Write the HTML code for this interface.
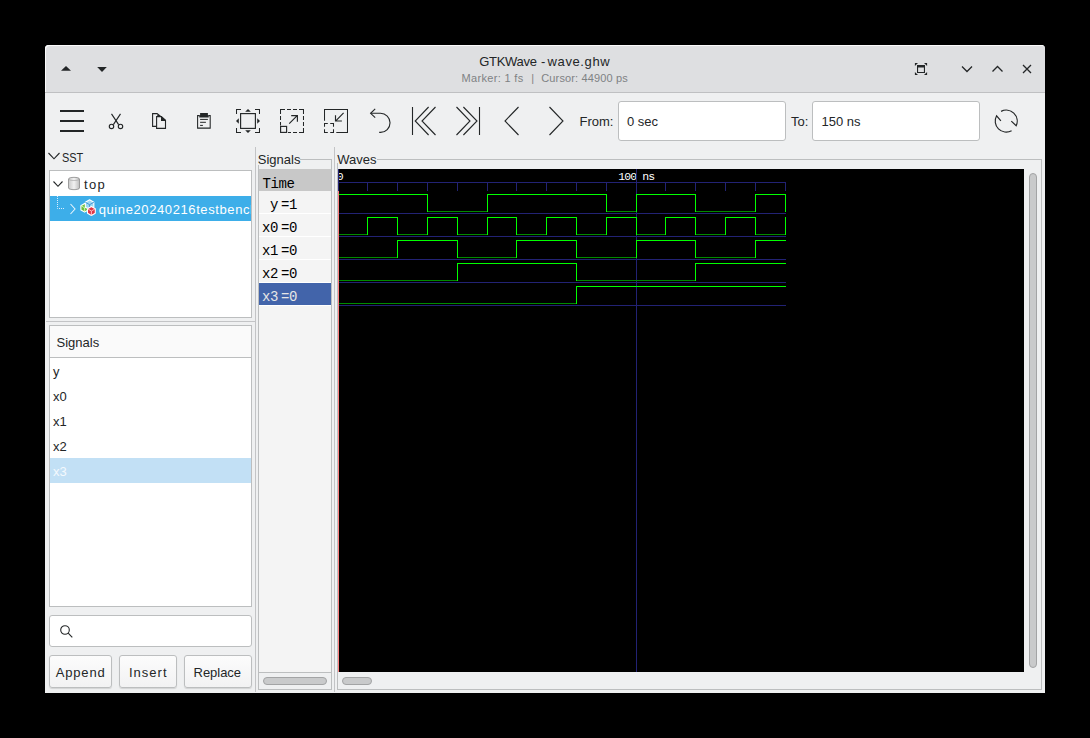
<!DOCTYPE html>
<html><head><meta charset="utf-8"><style>
html,body{margin:0;padding:0;}
body{width:1090px;height:738px;background:#000;position:relative;overflow:hidden;font-family:'Liberation Sans', sans-serif;}
body>div,body>svg{position:absolute;box-sizing:border-box;}
.t{white-space:pre;}
</style></head><body>
<div style="left:45px;top:45px;width:1000px;height:648px;background:#eff0f1;border-radius:4px 4px 0 0;"></div>
<div style="left:45px;top:45px;width:1000px;height:47px;background:#dedfe1;border-radius:4px 4px 0 0;box-shadow:inset 1px 1px 0 #fbfbfc;"></div>
<div style="left:45px;top:92px;width:1000px;height:1px;background:#bfc0c2;"></div>
<div class="t" style="left:479.3px;top:52.70px;font-size:13px;line-height:17px;color:#232627;font-family:'Liberation Sans', sans-serif;letter-spacing:-0.3px;">GTKWave</div>
<div class="t" style="left:540.9px;top:52.70px;font-size:13px;line-height:17px;color:#232627;font-family:'Liberation Sans', sans-serif;">-</div>
<div class="t" style="left:547.6px;top:52.70px;font-size:13px;line-height:17px;color:#232627;font-family:'Liberation Sans', sans-serif;letter-spacing:0.6px;">wave.ghw</div>
<div class="t" style="left:461.5px;top:71.39px;font-size:11px;line-height:14px;color:#7f8284;font-family:'Liberation Sans', sans-serif;letter-spacing:0.33px;">Marker: 1 fs</div>
<div class="t" style="left:531.2px;top:71.39px;font-size:11px;line-height:14px;color:#7f8284;font-family:'Liberation Sans', sans-serif;">|</div>
<div class="t" style="left:541.3px;top:71.39px;font-size:11px;line-height:14px;color:#7f8284;font-family:'Liberation Sans', sans-serif;letter-spacing:0.13px;">Cursor: 44900 ps</div>
<svg style="left:55px;top:60px;" width="60" height="16" viewBox="0 0 60 16"><path d="M6 10.7 L11 5.9 L16 10.7 Z" fill="#232627"/><path d="M42.2 6.9 L47 12 L51.8 6.9 Z" fill="#232627"/></svg>
<svg style="left:910px;top:58px;" width="130" height="22" viewBox="0 0 130 22"><g fill="none" stroke="#232627" stroke-width="1.3"></g><path fill-rule="evenodd" fill="#232627" d="M7 7 H15 V15 H7 Z M8.1 9.4 H13.9 V13.9 H8.1 Z"/><path fill="#232627" d="M4.9 4.9 H8 L4.9 8 Z M17.1 4.9 V8 L14 4.9 Z M4.9 17.1 V14 L8 17.1 Z M17.1 17.1 H14 L17.1 14 Z"/><g fill="none" stroke="#232627" stroke-width="1.3"><path d="M52 8.5 L57 13.5 L62 8.5"/><path d="M82.5 13.5 L87.5 8.5 L92.5 13.5"/><path d="M113 7 L121 15 M121 7 L113 15"/></g></svg>
<svg style="left:56px;top:105px;" width="32" height="32" viewBox="0 0 32 32"><g fill="#232627"><rect x="4" y="5" width="24" height="2"/><rect x="4" y="15" width="24" height="2"/><rect x="4" y="25" width="24" height="2"/></g></svg>
<svg style="left:104px;top:108px;" width="24" height="24" viewBox="0 0 24 24"><g fill="none" stroke="#232627" stroke-width="1.15"><path d="M7.5 5.9 L12 12.6 C12.8 13.8 13.6 15 14.6 16.6"/><path d="M16.5 5.9 L12 12.6 C11.2 13.8 10.4 15 9.4 16.6"/><circle cx="7.5" cy="18.4" r="2.2"/><circle cx="16.5" cy="18.4" r="2.2"/></g></svg>
<svg style="left:148px;top:108px;" width="24" height="24" viewBox="0 0 24 24"><g fill="none" stroke="#232627" stroke-width="1.1"><path d="M8.4 18.4 H4.6 V5.6 H9.6"/><path d="M8.6 8.6 H13.4 L17.5 12.6 V20.4 H8.6 Z"/></g><path d="M9.3 5 L18 12 V13 H13 V8.1 H9.3 Z" fill="#232627"/></svg>
<svg style="left:192px;top:108px;" width="24" height="24" viewBox="0 0 24 24"><g fill="none" stroke="#232627" stroke-width="1.05"><path d="M7.6 7.6 H5.6 V20.1 H18.2 V7.6 H16.4"/><path d="M8.1 11.4 H15.9 M8.1 14.3 H13.9 M8.1 17.4 H10.9" stroke-width="1"/></g><path d="M8.1 5.1 H15.9 V7.3 H16.7 V9.5 H7.3 V7.3 H8.1 Z" fill="#232627"/></svg>
<svg style="left:236px;top:109px;" width="24" height="24" viewBox="0 0 24 24"><g fill="none" stroke="#232627" stroke-width="1.05"><path d="M0.5 5 V0.5 H5 M19 0.5 H23.5 V5 M0.5 19 V23.5 H5 M19 23.5 H23.5 V19"/><rect x="4.6" y="4.6" width="14.8" height="14.8" stroke-width="1.15"/></g><g fill="#232627"><path d="M9.2 2.7 L12 0 L14.8 2.7Z M9.2 21.3 L12 24 L14.8 21.3Z M2.8 9.2 L0 12 L2.8 14.8Z M21.2 9.2 L24 12 L21.2 14.8Z"/></g></svg>
<svg style="left:280px;top:109px;" width="24" height="24" viewBox="0 0 24 24"><g fill="none" stroke="#232627" stroke-width="1.05"><path d="M0.5 5 V0.5 H5 M7 0.5 H11 M13 0.5 H17 M19 0.5 H23.5 V5 M23.5 7 V11 M23.5 13 V17 M23.5 19 V23.5 H19 M17 23.5 H13 M11 23.5 H8 M0.5 7 V11 M0.5 13 V16.5"/><rect x="0.6" y="17.4" width="6" height="6" stroke-width="1.15"/><path d="M9.2 14.6 L17.2 6.6 M11.2 6.6 H17.4 V12.8" stroke-width="1.15"/></g></svg>
<svg style="left:324px;top:109px;" width="24" height="24" viewBox="0 0 24 24"><g fill="none" stroke="#232627" stroke-width="1.05"><path d="M0.5 11.8 V0.5 H23.5 V23.5 H12.3"/><path d="M0.5 17.8 V14.5 H3.8 M6.2 14.5 H9.5 V17.8 M9.5 20.3 V23.5 H6.2 M3.8 23.5 H0.5 V20.3"/><path d="M19.6 3.8 L11.8 11.8 M11.5 6.2 V12 H17.9" stroke-width="1.15"/></g></svg>
<svg style="left:368px;top:108px;" width="24" height="26" viewBox="0 0 24 26"><g fill="none" stroke="#232627" stroke-width="1.1"><path d="M2.6 5.3 H12.5 A9.55 9.55 0 0 1 12.5 24.4 H11.2"/><path d="M7.2 0.9 L2.6 5.3 L7.2 9.7"/></g></svg>
<svg style="left:410px;top:106px;" width="28" height="30" viewBox="0 0 28 30"><g fill="none" stroke="#232627" stroke-width="1.1"><path d="M2.5 1 V29"/><path d="M18.6 1 L5.2 15 L18.6 29"/><path d="M25.5 1 L12 15 L25.5 29"/></g></svg>
<svg style="left:454px;top:106px;" width="28" height="30" viewBox="0 0 28 30"><g fill="none" stroke="#232627" stroke-width="1.1"><path d="M25.5 1 V29"/><path d="M9.4 1 L23 15 L9.4 29"/><path d="M2.5 1 L16 15 L2.5 29"/></g></svg>
<svg style="left:500px;top:106px;" width="24" height="30" viewBox="0 0 24 30"><g fill="none" stroke="#232627" stroke-width="1.1"><path d="M18.5 1 L5 15 L18.5 29"/></g></svg>
<svg style="left:544px;top:106px;" width="24" height="30" viewBox="0 0 24 30"><g fill="none" stroke="#232627" stroke-width="1.1"><path d="M5.5 1 L19 15 L5.5 29"/></g></svg>
<div class="t" style="left:579.5px;top:113.00px;font-size:13px;line-height:17px;color:#232627;font-family:'Liberation Sans', sans-serif;">From:</div>
<div style="left:618px;top:101px;width:168px;height:40px;background:#fff;border:1px solid #bcbebf;border-radius:3px;"></div>
<div class="t" style="left:627px;top:113.00px;font-size:13px;line-height:17px;color:#232627;font-family:'Liberation Sans', sans-serif;">0 sec</div>
<div class="t" style="left:791px;top:113.00px;font-size:13px;line-height:17px;color:#232627;font-family:'Liberation Sans', sans-serif;">To:</div>
<div style="left:812px;top:101px;width:168px;height:40px;background:#fff;border:1px solid #bcbebf;border-radius:3px;"></div>
<div class="t" style="left:821.5px;top:113.00px;font-size:13px;line-height:17px;color:#232627;font-family:'Liberation Sans', sans-serif;">150 ns</div>
<svg style="left:992px;top:107px;" width="28" height="28" viewBox="0 0 28 28"><g fill="none" stroke="#232627" stroke-width="1.15"><path d="M9.07 4.37 A11 11 0 0 1 24.17 18.75 L19.3 14.1"/><path d="M19.60 23.68 A11 11 0 0 1 4.58 8.77 L8.9 13.8"/></g></svg>
<svg style="left:46px;top:150px;" width="16" height="12" viewBox="0 0 16 12"><path d="M2.5 3 L8 8.8 L13.5 3" fill="none" stroke="#232627" stroke-width="1.1"/></svg>
<div class="t" style="left:62.2px;top:148.80px;font-size:13px;line-height:17px;color:#232627;font-family:'Liberation Sans', sans-serif;transform:scaleX(0.84);transform-origin:0 0;">SST</div>
<div style="left:49px;top:170px;width:203px;height:148px;background:#fff;border:1px solid #bcbebf;"></div>
<svg style="left:51px;top:178px;" width="14" height="12" viewBox="0 0 14 12"><path d="M2.5 3.5 L7 8.3 L11.5 3.5" fill="none" stroke="#232627" stroke-width="1.1"/></svg>
<svg style="left:67px;top:176px;" width="14" height="15" viewBox="0 0 14 15"><defs><linearGradient id="cy" x1="0" x2="1"><stop offset="0" stop-color="#c9c9c9"/><stop offset="0.5" stop-color="#f2f2f2"/><stop offset="1" stop-color="#bdbdbd"/></linearGradient></defs><path d="M1.5 3 C1.5 0.8 12.5 0.8 12.5 3 V12 C12.5 14.2 1.5 14.2 1.5 12 Z" fill="url(#cy)" stroke="#8a8a8a" stroke-width="0.8"/><path d="M1.5 3 C1.5 5 12.5 5 12.5 3" fill="none" stroke="#a0a0a0" stroke-width="0.6"/></svg>
<div class="t" style="left:84.0px;top:175.90px;font-size:13px;line-height:17px;color:#232627;font-family:'Liberation Sans', sans-serif;letter-spacing:1.3px;">top</div>
<div style="left:50px;top:196px;width:201px;height:25px;background:#3daee9;"></div>
<svg style="left:55px;top:196px;" width="12" height="16" viewBox="0 0 12 16"><path d="M2.5 0 V12.5 H9" fill="none" stroke="#dcefff" stroke-width="1" stroke-dasharray="1 1"/></svg>
<svg style="left:68px;top:202px;" width="10" height="14" viewBox="0 0 10 14"><path d="M2.5 2 L7 7 L2.5 12" fill="none" stroke="#e8f4fc" stroke-width="1.1"/></svg>
<svg style="left:76px;top:196px;" width="24" height="24" viewBox="0 0 24 24"><path d="M8.60 7.50 L12.32 9.65 L12.32 13.95 L8.60 16.10 L4.88 13.95 L4.88 9.65 Z" fill="#6cbf3e" stroke="#fff" stroke-width="1.1" stroke-linejoin="round"/><path d="M4.88 9.65 L8.60 11.80 L12.32 9.65 M8.60 11.80 V16.10" fill="none" stroke="#d6f5b8" stroke-width="0.9"/><path d="M13.60 3.80 L17.84 6.25 L17.84 11.15 L13.60 13.60 L9.36 11.15 L9.36 6.25 Z" fill="#9cd8f3" stroke="#fff" stroke-width="1.1" stroke-linejoin="round"/><path d="M9.36 6.25 L13.60 8.70 L17.84 6.25 M13.60 8.70 V13.60" fill="none" stroke="#3b8fd2" stroke-width="0.9"/><path d="M15.40 10.50 L19.30 12.75 L19.30 17.25 L15.40 19.50 L11.50 17.25 L11.50 12.75 Z" fill="#df3545" stroke="#fff" stroke-width="1.1" stroke-linejoin="round"/><path d="M11.50 12.75 L15.40 15.00 L19.30 12.75 M15.40 15.00 V19.50" fill="none" stroke="#ffc4ca" stroke-width="0.9"/></svg>
<div style="left:99px;top:196px;width:152px;height:25px;overflow:hidden;"><div class="t" style="position:absolute;left:-0.3px;top:4.8px;font-size:13px;letter-spacing:0.6px;line-height:17px;color:#fff;">quine20240216testbench</div></div>
<div style="left:46px;top:321px;width:209px;height:1px;background:#c3c4c6;"></div>
<div style="left:49px;top:325px;width:203px;height:282px;background:#fff;border:1px solid #bcbebf;"></div>
<div style="left:50px;top:326px;width:201px;height:31px;background:#fafafa;"></div>
<div style="left:50px;top:357px;width:201px;height:1px;background:#bcbebf;"></div>
<div class="t" style="left:56.5px;top:333.90px;font-size:13px;line-height:17px;color:#232627;font-family:'Liberation Sans', sans-serif;">Signals</div>
<div class="t" style="left:53px;top:363.00px;font-size:13px;line-height:17px;color:#232627;font-family:'Liberation Sans', sans-serif;">y</div>
<div class="t" style="left:53px;top:388.00px;font-size:13px;line-height:17px;color:#232627;font-family:'Liberation Sans', sans-serif;">x0</div>
<div class="t" style="left:53px;top:413.00px;font-size:13px;line-height:17px;color:#232627;font-family:'Liberation Sans', sans-serif;">x1</div>
<div class="t" style="left:53px;top:438.00px;font-size:13px;line-height:17px;color:#232627;font-family:'Liberation Sans', sans-serif;">x2</div>
<div style="left:50px;top:458px;width:201px;height:25px;background:#c2e0f5;"></div>
<div class="t" style="left:53px;top:463.00px;font-size:13px;line-height:17px;color:#f4f9fd;font-family:'Liberation Sans', sans-serif;">x3</div>
<div style="left:49px;top:615px;width:203px;height:32px;background:#fff;border:1px solid #bcbebf;border-radius:3px;"></div>
<svg style="left:58px;top:623px;" width="16" height="16" viewBox="0 0 16 16"><g fill="none" stroke="#232627" stroke-width="1.1"><circle cx="7" cy="7" r="4.3"/><path d="M10.2 10.2 L14.3 14.3"/></g></svg>
<div style="left:49px;top:655px;width:63px;height:33px;background:linear-gradient(#fcfcfc,#f2f2f3);border:1px solid #bcbebf;border-radius:3px;box-shadow:0 1px 1px rgba(0,0,0,0.12);"></div>
<div class="t" style="left:55.7px;top:664.00px;font-size:13px;line-height:17px;color:#232627;font-family:'Liberation Sans', sans-serif;letter-spacing:0.85px;">Append</div>
<div style="left:119px;top:655px;width:58px;height:33px;background:linear-gradient(#fcfcfc,#f2f2f3);border:1px solid #bcbebf;border-radius:3px;box-shadow:0 1px 1px rgba(0,0,0,0.12);"></div>
<div class="t" style="left:129px;top:664.00px;font-size:13px;line-height:17px;color:#232627;font-family:'Liberation Sans', sans-serif;letter-spacing:1.0px;">Insert</div>
<div style="left:184px;top:655px;width:68px;height:33px;background:linear-gradient(#fcfcfc,#f2f2f3);border:1px solid #bcbebf;border-radius:3px;box-shadow:0 1px 1px rgba(0,0,0,0.12);"></div>
<div class="t" style="left:193.6px;top:664.00px;font-size:13px;line-height:17px;color:#232627;font-family:'Liberation Sans', sans-serif;letter-spacing:-0.05px;">Replace</div>
<div style="left:255px;top:147px;width:1px;height:545px;background:#c3c4c6;"></div>
<div class="t" style="left:257.8px;top:150.70px;font-size:13px;line-height:17px;color:#232627;font-family:'Liberation Sans', sans-serif;">Signals</div>
<div style="left:300px;top:159px;width:32px;height:1px;background:#bcbebf;"></div>
<div style="left:258px;top:165px;width:1px;height:525px;background:#bcbebf;"></div>
<div style="left:331px;top:159px;width:1px;height:531px;background:#bcbebf;"></div>
<div style="left:258px;top:689px;width:74px;height:1px;background:#bcbebf;"></div>
<div style="left:259px;top:169px;width:72px;height:503px;background:#f4f4f4;"></div>
<div style="left:259px;top:169px;width:72px;height:22px;background:#c8c8c8;"></div>
<div class="t" style="left:262.5px;top:174.97px;font-size:14px;line-height:18px;color:#000;font-family:'Liberation Mono', monospace;letter-spacing:-0.4px;">Time</div>
<div style="left:259px;top:213px;width:72px;height:1px;background:#fff;"></div>
<div class="t" style="left:262.1px;top:196.27px;font-size:14px;line-height:18px;color:#000;font-family:'Liberation Mono', monospace;letter-spacing:-0.4px;"> y</div>
<div class="t" style="left:281.1px;top:196.27px;font-size:14px;line-height:18px;color:#000;font-family:'Liberation Mono', monospace;letter-spacing:-0.4px;">=1</div>
<div style="left:259px;top:236px;width:72px;height:1px;background:#fff;"></div>
<div class="t" style="left:262.1px;top:219.27px;font-size:14px;line-height:18px;color:#000;font-family:'Liberation Mono', monospace;letter-spacing:-0.4px;">x0</div>
<div class="t" style="left:281.1px;top:219.27px;font-size:14px;line-height:18px;color:#000;font-family:'Liberation Mono', monospace;letter-spacing:-0.4px;">=0</div>
<div style="left:259px;top:259px;width:72px;height:1px;background:#fff;"></div>
<div class="t" style="left:262.1px;top:242.27px;font-size:14px;line-height:18px;color:#000;font-family:'Liberation Mono', monospace;letter-spacing:-0.4px;">x1</div>
<div class="t" style="left:281.1px;top:242.27px;font-size:14px;line-height:18px;color:#000;font-family:'Liberation Mono', monospace;letter-spacing:-0.4px;">=0</div>
<div style="left:259px;top:282px;width:72px;height:1px;background:#fff;"></div>
<div class="t" style="left:262.1px;top:265.27px;font-size:14px;line-height:18px;color:#000;font-family:'Liberation Mono', monospace;letter-spacing:-0.4px;">x2</div>
<div class="t" style="left:281.1px;top:265.27px;font-size:14px;line-height:18px;color:#000;font-family:'Liberation Mono', monospace;letter-spacing:-0.4px;">=0</div>
<div style="left:259px;top:305px;width:72px;height:1px;background:#fff;"></div>
<div style="left:259px;top:283px;width:72px;height:22px;background:#4264aa;"></div>
<div class="t" style="left:262.1px;top:288.27px;font-size:14px;line-height:18px;color:#e6e6e6;font-family:'Liberation Mono', monospace;letter-spacing:-0.4px;">x3</div>
<div class="t" style="left:281.1px;top:288.27px;font-size:14px;line-height:18px;color:#e6e6e6;font-family:'Liberation Mono', monospace;letter-spacing:-0.4px;">=0</div>
<div style="left:263px;top:677px;width:64px;height:8px;background:#c9cacb;border:1px solid #a3a4a5;border-radius:4px;"></div>
<div style="left:259px;top:672px;width:72px;height:1px;background:#bcbebf;"></div>
<div style="left:334px;top:147px;width:1px;height:545px;background:#c3c4c6;"></div>
<div class="t" style="left:337.3px;top:150.70px;font-size:13px;line-height:17px;color:#232627;font-family:'Liberation Sans', sans-serif;">Waves</div>
<div style="left:377px;top:159px;width:665px;height:1px;background:#bcbebf;"></div>
<div style="left:337px;top:163px;width:1px;height:527px;background:#bcbebf;"></div>
<div style="left:1041px;top:159px;width:1px;height:531px;background:#bcbebf;"></div>
<div style="left:337px;top:689px;width:705px;height:1px;background:#bcbebf;"></div>
<div style="left:1029px;top:173px;width:8px;height:495px;background:#c9cacb;border:1px solid #a3a4a5;border-radius:4px;"></div>
<div style="left:342px;top:677px;width:30px;height:8px;background:#c9cacb;border:1px solid #a3a4a5;border-radius:4px;"></div>
<svg style="left:338px;top:169px;" width="686" height="503" viewBox="0 0 686 503"><rect width="686" height="503" fill="#000"/><text x="280.2" y="11" fill="#fff" font-family="Liberation Mono" font-size="11.5" letter-spacing="-0.9">100 ns</text><text x="-1.2" y="11" fill="#fff" font-family="Liberation Mono" font-size="11.5">0</text><g shape-rendering="crispEdges" stroke-width="1" fill="none"><path d="M0 13.5 H448" stroke="#222274" /><path d="M29.5 14 V22 M59.5 14 V22 M89.5 14 V22 M119.5 14 V22 M149.5 14 V22 M178.5 14 V22 M208.5 14 V22 M238.5 14 V22 M268.5 14 V22 M298.5 14 V22 M327.5 14 V22 M357.5 14 V22 M387.5 14 V22 M417.5 14 V22 M447.5 14 V22 " stroke="#222274"/><path d="M0.5 0 V22" stroke="#222274"/><path d="M0 44.5 H448" stroke="#222274"/><path d="M0 67.5 H448" stroke="#222274"/><path d="M0 90.5 H448" stroke="#222274"/><path d="M0 113.5 H448" stroke="#222274"/><path d="M0 136.5 H448" stroke="#222274"/><path d="M298.5 0 V503" stroke="#222274"/><path d="M89 42.5 H150 M268 42.5 H299 M357 42.5 H418 M447 42.5 H448 M0 65.5 H30 M59 65.5 H90 M119 65.5 H150 M178 65.5 H209 M238 65.5 H269 M298 65.5 H328 M357 65.5 H388 M417 65.5 H448 M0 88.5 H60 M119 88.5 H179 M238 88.5 H299 M357 88.5 H418 M0 111.5 H120 M238 111.5 H358 M0 134.5 H239 " stroke="#008a00"/><path d="M0 25.5 H90 M149 25.5 H269 M298 25.5 H358 M417 25.5 H448 M29 48.5 H60 M89 48.5 H120 M149 48.5 H179 M208 48.5 H239 M268 48.5 H299 M327 48.5 H358 M387 48.5 H418 M447 48.5 H448 M59 71.5 H120 M178 71.5 H239 M298 71.5 H358 M417 71.5 H448 M119 94.5 H239 M357 94.5 H448 M238 117.5 H448 " stroke="#00ff00"/><path d="M89.5 25.5 V42.5 M149.5 25.5 V42.5 M268.5 25.5 V42.5 M298.5 25.5 V42.5 M357.5 25.5 V42.5 M417.5 25.5 V42.5 M447.5 25.5 V42.5 M29.5 48.5 V65.5 M59.5 48.5 V65.5 M89.5 48.5 V65.5 M119.5 48.5 V65.5 M149.5 48.5 V65.5 M178.5 48.5 V65.5 M208.5 48.5 V65.5 M238.5 48.5 V65.5 M268.5 48.5 V65.5 M298.5 48.5 V65.5 M327.5 48.5 V65.5 M357.5 48.5 V65.5 M387.5 48.5 V65.5 M417.5 48.5 V65.5 M447.5 48.5 V65.5 M59.5 71.5 V88.5 M119.5 71.5 V88.5 M178.5 71.5 V88.5 M238.5 71.5 V88.5 M298.5 71.5 V88.5 M357.5 71.5 V88.5 M417.5 71.5 V88.5 M119.5 94.5 V111.5 M238.5 94.5 V111.5 M357.5 94.5 V111.5 M238.5 117.5 V134.5 M447.5 25.5 V42.5 M447.5 48.5 V65.5 " stroke="#00ff00"/><path d="M0.5 22 V503" stroke="#ff8080"/></g></svg>
</body></html>
